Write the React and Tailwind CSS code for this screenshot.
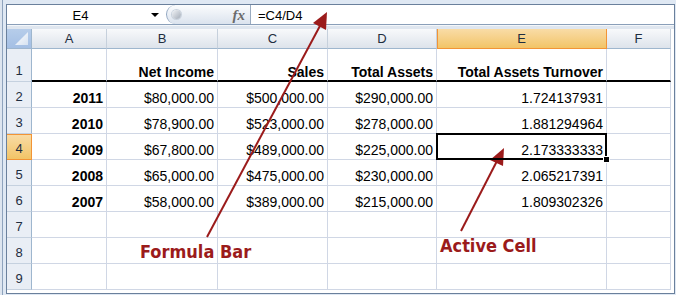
import React from "react";

const rows = [
  ["", "Net Income", "Sales", "Total Assets", "Total Assets Turnover", ""],
  ["2011", "$80,000.00", "$500,000.00", "$290,000.00", "1.724137931", ""],
  ["2010", "$78,900.00", "$523,000.00", "$278,000.00", "1.881294964", ""],
  ["2009", "$67,800.00", "$489,000.00", "$225,000.00", "2.173333333", ""],
  ["2008", "$65,000.00", "$475,000.00", "$230,000.00", "2.065217391", ""],
  ["2007", "$58,000.00", "$389,000.00", "$215,000.00", "1.809302326", ""],
  ["", "", "", "", "", ""],
  ["", "", "", "", "", ""],
  ["", "", "", "", "", ""],
];

const letters = ["A", "B", "C", "D", "E", "F"];

const FormulaBar = () => (
  <div className="flex h-[20px] border-b border-[#8a9fb9] bg-white">
    {/* Name box */}
    <div className="relative flex w-[159px] items-center justify-center pr-[12px] pt-[2px] text-[13px] text-black">
      E4
      <span className="absolute right-[7px] top-[8px] h-0 w-0 border-x-[4px] border-t-[4px] border-x-transparent border-t-black" />
    </div>
    {/* fx pill */}
    <div className="relative w-[84px] rounded-l-full border-l border-[#93a8c2] bg-gradient-to-b from-[#fbfcfd] to-[#dbe3ee]">
      <span className="absolute left-[5px] top-[5px] h-[9px] w-[9px] rounded-full bg-gradient-to-br from-[#f2f4f7] to-[#a3acb8] shadow-[0_0_0_1px_#c9d2dd]" />
      <span className="absolute right-[5px] top-[1px] font-['Liberation_Serif',serif] text-[15px] font-bold italic leading-[18px] text-[#6b6b6b]">
        fx
      </span>
    </div>
    {/* Formula */}
    <div className="flex flex-1 items-center border-l border-[#9aabc0] pl-[7px] pt-[2px] text-[13px] text-black">
      =C4/D4
    </div>
  </div>
);

const Grid = () => (
  <div className="grid grid-cols-[25px_75px_111px_110px_109px_170px_64px] grid-rows-[20px_33px_repeat(8,26px)]">
    {/* corner */}
    <div className="relative border-r border-b border-[#9eb6ce] bg-gradient-to-b from-[#b6cdea] to-[#a4bfe4]">
      <svg className="absolute right-[3px] bottom-[3px]" width="13" height="13" viewBox="0 0 13 13">
        <defs>
          <linearGradient id="tri" x1="0" y1="0" x2="1" y2="1">
            <stop offset="0" stopColor="#ffffff" />
            <stop offset="1" stopColor="#d6e2f1" />
          </linearGradient>
        </defs>
        <polygon points="13,0 13,13 0,13" fill="url(#tri)" />
      </svg>
    </div>
    {letters.map((l) =>
      l === "E" ? (
        <div
          key={l}
          className="flex items-center justify-center border-r border-b border-[#f29436] bg-gradient-to-b from-[#f9dca6] to-[#f2c466] pt-[1px] text-[13px] text-[#1e2d40] shadow-[inset_1px_0_0_#f29436]"
        >
          {l}
        </div>
      ) : (
        <div
          key={l}
          className="flex items-center justify-center border-r border-b border-r-[#c6d0dc] border-b-[#9eb6ce] bg-gradient-to-b from-[#f8f9fb] to-[#dde3eb] pt-[1px] text-[13px] text-[#1e2d40]"
        >
          {l}
        </div>
      )
    )}
    {rows.map((row, r) => (
      <React.Fragment key={r}>
        {r === 3 ? (
          <div className="flex items-end justify-center border-r border-b border-[#f29436] bg-gradient-to-b from-[#f9dca6] to-[#f2c466] pb-[2px] text-[13px] leading-[16px] text-[#1e2d40] shadow-[inset_0_1px_0_#f29436]">
            {r + 1}
          </div>
        ) : (
          <div className="flex items-end justify-center border-r border-b border-r-[#9eb6ce] border-b-[#c5d1df] bg-[#e9eef5] pb-[2px] text-[13px] leading-[16px] text-[#1e2d40]">
            {r + 1}
          </div>
        )}
        {row.map((v, c) => (
          <div
            key={c}
            className={
              r === 0
                ? "flex items-end justify-end border-r border-b-2 border-r-[#d0d7e5] border-b-black bg-white pr-[3px] text-[14px] font-bold leading-[16px] text-black"
                : c === 0
                ? "flex items-end justify-end border-r border-b border-[#d0d7e5] bg-white pr-[3px] pb-[1px] text-[14px] font-bold leading-[16px] text-black"
                : "relative flex items-end justify-end border-r border-b border-[#d0d7e5] bg-white pr-[3px] pb-[1px] text-[14px] leading-[16px] text-black"
            }
          >
            {v}
            {r === 3 && c === 4 && (
              <>
                <span className="absolute -left-[1px] -top-[1px] z-10 h-[27px] w-[171px] border-2 border-black" />
                <span className="absolute left-[167px] top-[23px] z-20 h-[5px] w-[5px] bg-black shadow-[0_0_0_1px_#ffffff]" />
              </>
            )}
          </div>
        ))}
      </React.Fragment>
    ))}
  </div>
);

const Arrows = () => (
  <svg className="pointer-events-none absolute left-0 top-0" width="676" height="295" viewBox="0 0 676 295">
    <line x1="207" y1="237" x2="321" y2="24" stroke="#9b1b1b" strokeWidth="2" />
    <polygon points="327,12 326,30 313,23" fill="#9b1b1b" />
    <line x1="461" y1="231" x2="498" y2="159" stroke="#9b1b1b" strokeWidth="2" />
    <polygon points="504,148 503,166 490,160" fill="#9b1b1b" />
  </svg>
);

export default function App() {
  return (
    <div className="relative h-[295px] w-[676px] overflow-hidden bg-[#dde5ef] font-['Liberation_Sans',Arial,sans-serif]">
      <div className="ml-[2px] h-full border-l border-[#8ea3bd] bg-[#dfe8f3] pl-[3px] pt-[4px]">
        <div className="flex h-[290px] w-[669px] flex-col border border-[#6a809c] bg-white">
          <FormulaBar />
          <div className="h-[4px] border-t border-[#f4f7fa] bg-[#dfe6ef]" />
          <Grid />
        </div>
      </div>

      <Arrows />

      <div className="absolute left-[140px] top-[243px] font-['DejaVu_Sans_Condensed','DejaVu_Sans',sans-serif] text-[18px] font-bold leading-[18px] text-[#9b1b1b] [font-stretch:condensed]">
        Formula Bar
      </div>
      <div className="absolute left-[440px] top-[237px] font-['DejaVu_Sans_Condensed','DejaVu_Sans',sans-serif] text-[18px] font-bold leading-[18px] text-[#9b1b1b] [font-stretch:condensed]">
        Active Cell
      </div>
    </div>
  );
}
